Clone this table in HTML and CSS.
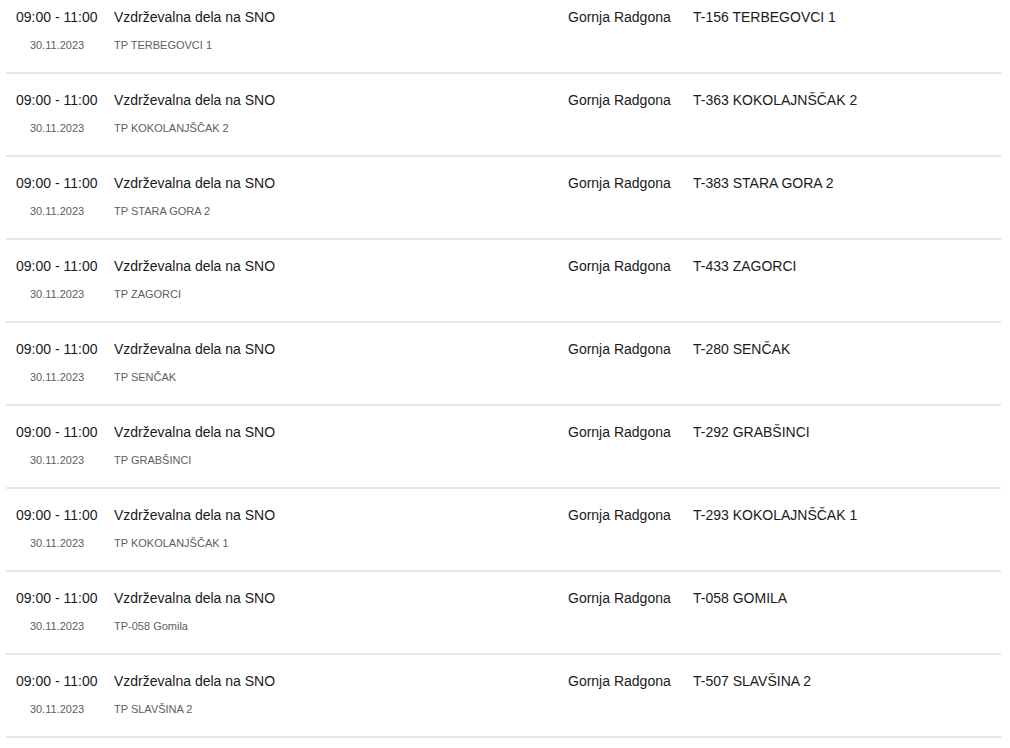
FILE: index.html
```html
<!DOCTYPE html>
<html lang="sl">
<head>
<meta charset="utf-8">
<link rel="stylesheet" href="styles.css">
</head>
<body>
<div class="list">
  <div class="row">
    <div class="c-time"><div class="time">09:00 - 11:00</div><div class="date">30.11.2023</div></div>
    <div class="c-title"><div class="title">Vzdrževalna dela na SNO</div><div class="sub">TP TERBEGOVCI 1</div></div>
    <div class="c-loc">Gornja Radgona</div>
    <div class="c-code">T-156 TERBEGOVCI 1</div>
  </div>
  <div class="row">
    <div class="c-time"><div class="time">09:00 - 11:00</div><div class="date">30.11.2023</div></div>
    <div class="c-title"><div class="title">Vzdrževalna dela na SNO</div><div class="sub">TP KOKOLANJŠČAK 2</div></div>
    <div class="c-loc">Gornja Radgona</div>
    <div class="c-code">T-363 KOKOLAJNŠČAK 2</div>
  </div>
  <div class="row">
    <div class="c-time"><div class="time">09:00 - 11:00</div><div class="date">30.11.2023</div></div>
    <div class="c-title"><div class="title">Vzdrževalna dela na SNO</div><div class="sub">TP STARA GORA 2</div></div>
    <div class="c-loc">Gornja Radgona</div>
    <div class="c-code">T-383 STARA GORA 2</div>
  </div>
  <div class="row">
    <div class="c-time"><div class="time">09:00 - 11:00</div><div class="date">30.11.2023</div></div>
    <div class="c-title"><div class="title">Vzdrževalna dela na SNO</div><div class="sub">TP ZAGORCI</div></div>
    <div class="c-loc">Gornja Radgona</div>
    <div class="c-code">T-433 ZAGORCI</div>
  </div>
  <div class="row">
    <div class="c-time"><div class="time">09:00 - 11:00</div><div class="date">30.11.2023</div></div>
    <div class="c-title"><div class="title">Vzdrževalna dela na SNO</div><div class="sub">TP SENČAK</div></div>
    <div class="c-loc">Gornja Radgona</div>
    <div class="c-code">T-280 SENČAK</div>
  </div>
  <div class="row">
    <div class="c-time"><div class="time">09:00 - 11:00</div><div class="date">30.11.2023</div></div>
    <div class="c-title"><div class="title">Vzdrževalna dela na SNO</div><div class="sub">TP GRABŠINCI</div></div>
    <div class="c-loc">Gornja Radgona</div>
    <div class="c-code">T-292 GRABŠINCI</div>
  </div>
  <div class="row">
    <div class="c-time"><div class="time">09:00 - 11:00</div><div class="date">30.11.2023</div></div>
    <div class="c-title"><div class="title">Vzdrževalna dela na SNO</div><div class="sub">TP KOKOLANJŠČAK 1</div></div>
    <div class="c-loc">Gornja Radgona</div>
    <div class="c-code">T-293 KOKOLAJNŠČAK 1</div>
  </div>
  <div class="row">
    <div class="c-time"><div class="time">09:00 - 11:00</div><div class="date">30.11.2023</div></div>
    <div class="c-title"><div class="title">Vzdrževalna dela na SNO</div><div class="sub">TP-058 Gomila</div></div>
    <div class="c-loc">Gornja Radgona</div>
    <div class="c-code">T-058 GOMILA</div>
  </div>
  <div class="row">
    <div class="c-time"><div class="time">09:00 - 11:00</div><div class="date">30.11.2023</div></div>
    <div class="c-title"><div class="title">Vzdrževalna dela na SNO</div><div class="sub">TP SLAVŠINA 2</div></div>
    <div class="c-loc">Gornja Radgona</div>
    <div class="c-code">T-507 SLAVŠINA 2</div>
  </div>
</div>
</body>
</html>
```
FILE: styles.css
```css
html, body {
  margin: 0;
  padding: 0;
  background: #fff;
}
body {
  font-family: "Liberation Sans", Arial, sans-serif;
  color: #1a1a1a;
  overflow: hidden;
}
.list {
  margin: -9px 9px 0 6px;
}
.row {
  display: grid;
  grid-template-columns: 98px 454px 125px 1fr;
  padding: 18px 0 0 10px;
  height: 63px;
  border-bottom: 2px solid #e6e6e6;
}
.c-time {
  width: 82px;
  text-align: center;
}
.time, .title, .c-loc, .c-code {
  font-size: 14px;
  line-height: 16px;
  white-space: nowrap;
}
.time { text-align: left; }
.date, .sub {
  font-size: 11px;
  line-height: 13px;
  color: #5e5e5e;
  margin-top: 14px;
  white-space: nowrap;
}
```
